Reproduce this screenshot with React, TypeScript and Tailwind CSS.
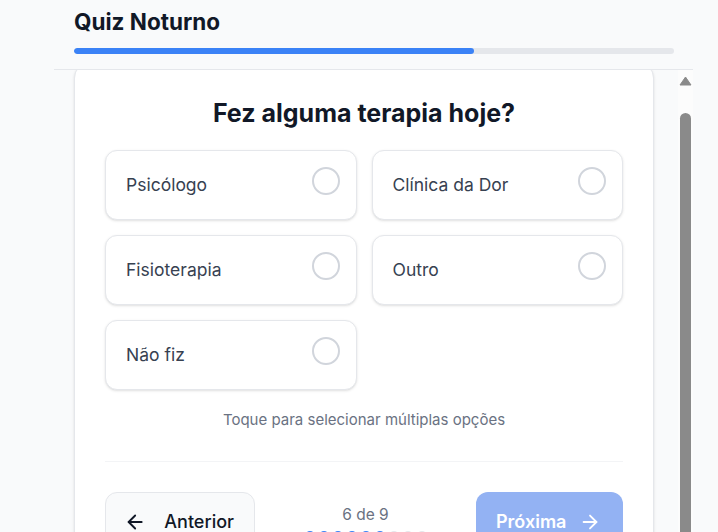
import React from 'react';
import { ArrowLeft, ArrowRight } from 'lucide-react';

const options = ['Psicólogo', 'Clínica da Dor', 'Fisioterapia', 'Outro', 'Não fiz'];

const Scrollbar: React.FC = () => (
  <div className="flex w-[15px] shrink-0 flex-col items-center bg-[#fcfcfc]">
    <svg width="15" height="17" viewBox="0 0 15 17">
      <polygon points="7.5,7 13,15 2,15" fill="#8a8a8a" strokeLinejoin="round" stroke="#8a8a8a" strokeWidth="1" />
    </svg>
    <div className="mt-[26px] h-[500px] w-[11px] rounded-full bg-[#8a8a8a]" />
  </div>
);

export default function App() {
  return (
    <div className="h-screen overflow-hidden bg-gray-50 pl-[54px] pr-[25px] font-['Inter',sans-serif]">
      <header className="pl-5 pr-[19px] pt-2 pb-[15px]">
        <h1 className="text-[22.5px] leading-7 font-bold text-[#111827]">Quiz Noturno</h1>
        <div className="mt-3 h-1.5 rounded-full bg-gray-200 overflow-hidden">
          <div className="h-full w-2/3 rounded-full bg-[#3b82f6]" />
        </div>
      </header>

      <div className="flex h-[600px] border-t border-gray-200">
        <div className="flex-1 overflow-hidden pl-5">
          <div className="-mt-2 w-[580px] rounded-2xl border border-gray-200 bg-white px-[30px] pt-[34px] pb-8 shadow-sm">
            <h2 className="text-center text-[25px] leading-8 font-bold text-[#111827] mb-[21px]">
              Fez alguma terapia hoje?
            </h2>

            <div className="grid grid-cols-2 gap-x-[15px] gap-y-[15px]">
              {options.map((opt) => (
                <div
                  key={opt}
                  className="relative flex h-[70px] items-center rounded-xl border border-gray-200 bg-white px-5 pt-px shadow-sm"
                >
                  <span className="text-[17.5px] text-[#374151]">{opt}</span>
                  <span className="absolute top-4 right-4 h-7 w-7 rounded-full border-2 border-gray-300" />
                </div>
              ))}
            </div>

            <p className="mt-5 text-center text-[15px] leading-5 text-gray-500">
              Toque para selecionar múltiplas opções
            </p>

            <div className="mt-[31px] border-t border-gray-100 pt-[30px] flex items-center justify-between">
              <button className="flex items-center gap-[18px] rounded-xl border border-gray-200 bg-gray-50 pl-[18px] pr-5 h-[60px] w-[150px] text-lg font-medium text-[#111827]">
                <ArrowLeft className="w-6 h-6" strokeWidth={2} />
                Anterior
              </button>

              <div className="flex flex-col items-center gap-1.5">
                <span className="text-[15.5px] leading-5 text-gray-500">6 de 9</span>
                <div className="flex gap-1.5">
                  {Array.from({ length: 9 }).map((_, i) => (
                    <span
                      key={i}
                      className={i < 6 ? 'h-2 w-2 rounded-full bg-[#3b82f6]' : 'h-2 w-2 rounded-full bg-gray-200'}
                    />
                  ))}
                </div>
              </div>

              <button className="flex items-center justify-between rounded-xl bg-[#93b2f3] pl-5 pr-[22px] h-[60px] w-[147px] text-lg font-semibold text-white">
                Próxima
                <ArrowRight className="w-[22px] h-[22px]" strokeWidth={2} />
              </button>
            </div>
          </div>
        </div>
        <Scrollbar />
      </div>
    </div>
  );
}
